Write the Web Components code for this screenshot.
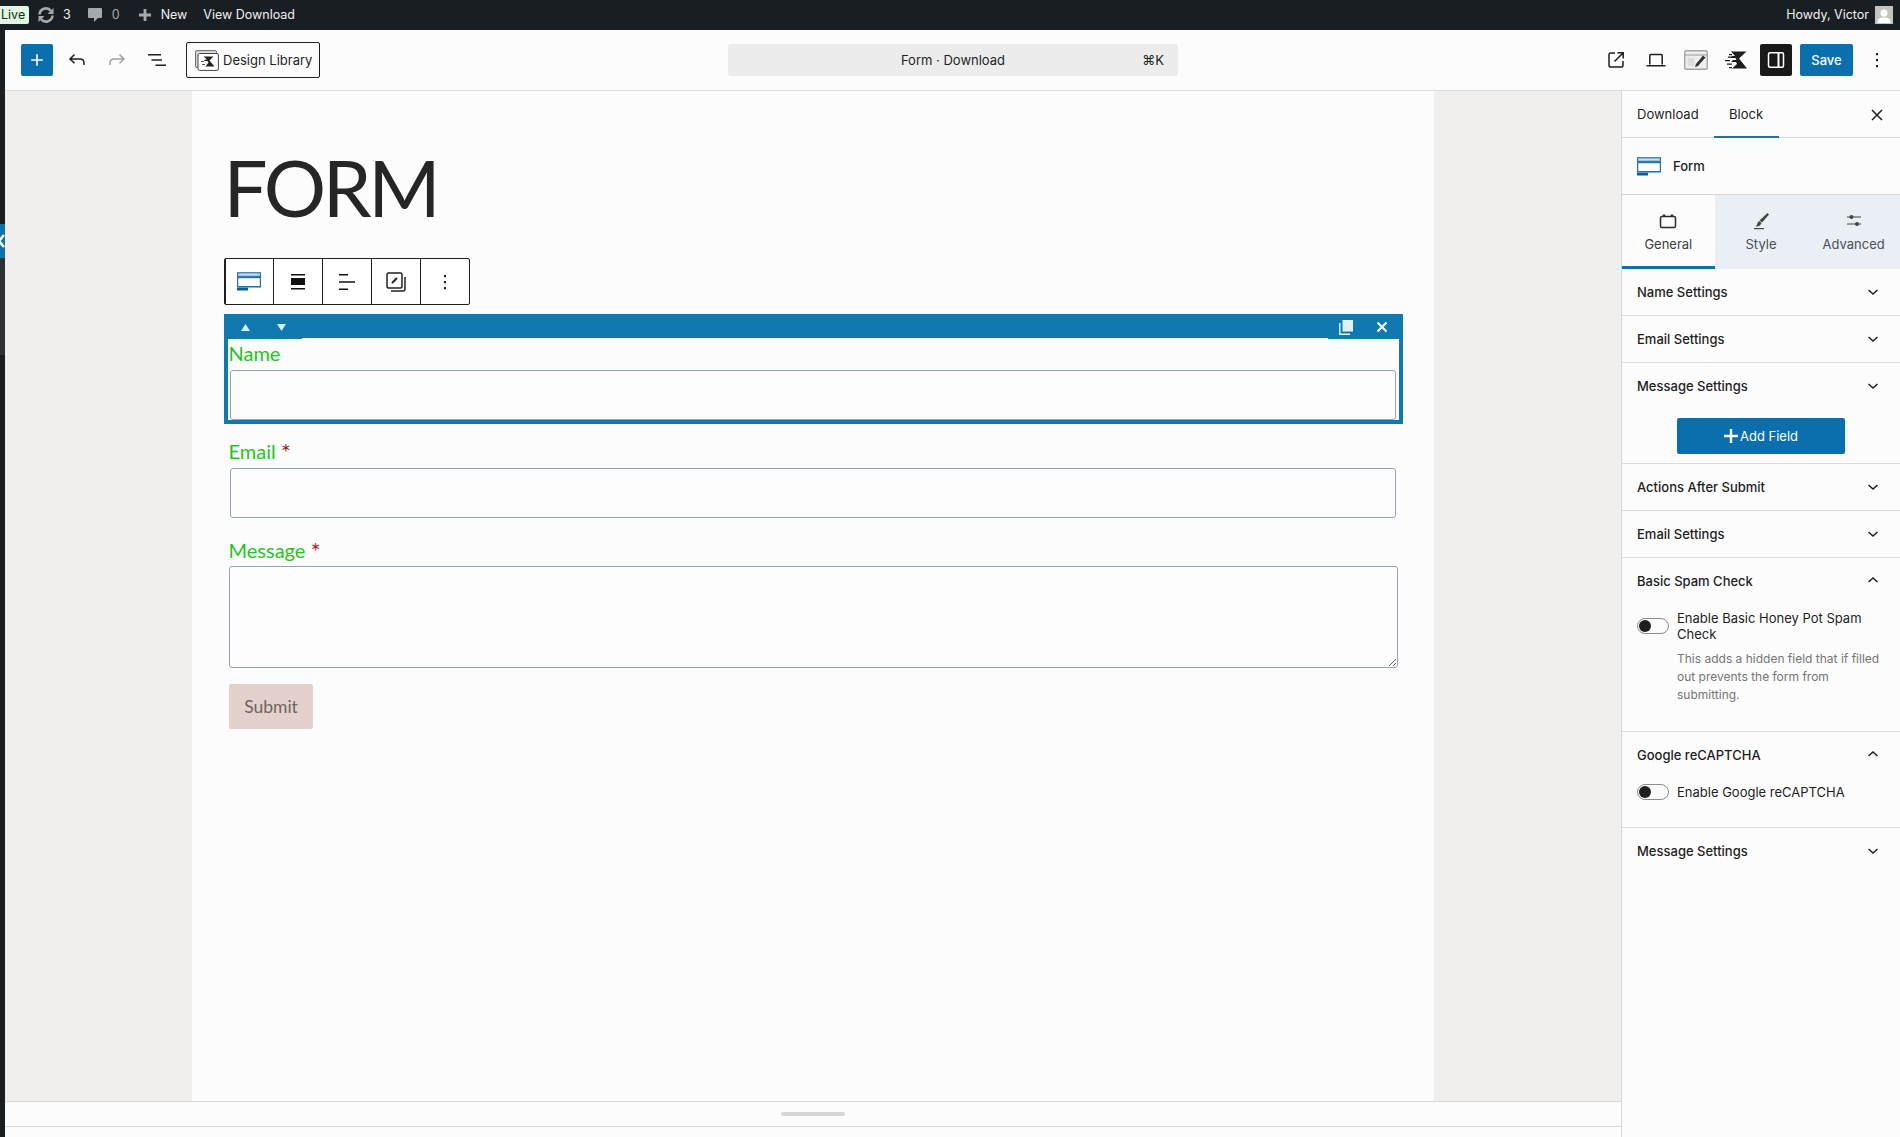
<!DOCTYPE html>
<html lang="en"><head><meta charset="utf-8"><title>Form</title>
<style>
html,body{margin:0;height:100%;overflow:hidden;background:#fcfcfc}
body{font:13px/1.4 Inter,"Liberation Sans",sans-serif;color:#1e1e1e}
</style></head><body>
<wp-editor>
  <wp-adminbar slot="bar"></wp-adminbar>
  <wp-rail slot="rail"></wp-rail>
  <wp-toolbar slot="toolbar"></wp-toolbar>
  <wp-canvas slot="canvas"></wp-canvas>
  <wp-sidebar slot="sidebar"></wp-sidebar>
</wp-editor>
<script>
const I={
 plus:'<svg width="24" height="24" viewBox="0 0 24 24" fill="currentColor"><path d="M11.200 6.200h1.600v5h5v1.600h-5v5h-1.600v-5h-5v-1.600h5z"/></svg>',
 undo:'<svg width="24" height="24" viewBox="0 0 24 24" fill="none" stroke="currentColor" stroke-width="1.500"><path d="M9.500 6.500 5 11l4.500 4.300M5.300 11h9.700c2.500 0 4 1.700 4 4v2"/></svg>',
 redo:'<svg width="24" height="24" viewBox="0 0 24 24" fill="none" stroke="currentColor" stroke-width="1.500"><path d="M14.500 6.500 19 11l-4.500 4.300M18.700 11H9c-2.500 0-4 1.700-4 4v2"/></svg>',
 list:'<svg width="24" height="24" viewBox="0 0 24 24" fill="currentColor"><path d="M3 6h13v1.500H3zM6.500 11.300H17v1.500H6.500zM10.500 16.500H21V18H10.500z"/></svg>',
 ext:'<svg width="24" height="24" viewBox="0 0 24 24" fill="none" stroke="currentColor" stroke-width="1.500"><path d="M11 5H6.500A1.500 1.500 0 0 0 5 6.500v11A1.500 1.500 0 0 0 6.500 19h11a1.500 1.500 0 0 0 1.500-1.500V13M13.500 4.800h5.700v5.700M19 5l-8.500 8.500"/></svg>',
 laptop:'<svg width="24" height="24" viewBox="0 0 24 24" fill="none" stroke="currentColor" stroke-width="1.500"><path d="M5.800 16.500V7.200a.8.8 0 0 1 .8-.8h10.800a.8.8 0 0 1 .8.8v9.300M2.500 17.700h19"/></svg>',
 kad:'<svg width="24" height="24" viewBox="0 0 24 24" fill="currentColor"><path d="M7 3.500h15.500L15 10.500l8 10H8l5-4.500-1-2-5 0 2-2h3.500l-1-2-5 0 1.500-2H11z"/><path d="M1 12h5v1.300H1zM4 8.500h3.500v1.300H4zM3 15.500h5v1.300H3zM5 6h3v1.300H5zM5 19h3v1.300H5z"/></svg>',
 chev:'<svg width="24" height="24" viewBox="0 0 24 24" fill="none" stroke="currentColor" stroke-width="1.500"><path d="m7.500 10 4.500 4 4.500-4"/></svg>',
 chevUp:'<svg width="24" height="24" viewBox="0 0 24 24" fill="none" stroke="currentColor" stroke-width="1.500"><path d="m7.500 13 4.500-4 4.500 4"/></svg>',
 dots:'<svg width="24" height="24" viewBox="0 0 24 24" fill="currentColor"><path d="M11 5h2v2.300h-2zM11 11h2v2.300h-2zM11 17h2v2.300h-2z"/></svg>',
 x:'<svg width="24" height="24" viewBox="0 0 24 24" fill="none" stroke="currentColor" stroke-width="1.500"><path d="m7 7 10 10M17 7 7 17"/></svg>',
 form:'<svg width="24" height="19" viewBox="0 0 24 19"><g fill="none" stroke="#2a6ea8" stroke-width="1.200"><rect x=".6" y=".8" width="22.800" height="3.500" fill="#cfe0ee"/><rect x=".6" y="5.600" width="22.800" height="9"/></g><path d="M0 15h11v3.500H0z" fill="#0b5d9e"/><path d="M0 15h24v.8H0z" fill="#7aa6c8"/></svg>'
};
function def(name,css,html){customElements.define(name,class extends HTMLElement{constructor(){super();this.attachShadow({mode:'open'}).innerHTML='<style>'+css+'</style>'+(typeof html==='function'?html(this):html)}})}

def('wp-editor',`:host{display:grid;grid-template:30px 61px 1fr/5px 1fr 279px;height:100vh}
 ::slotted([slot=bar]){grid-column:1/4}
 ::slotted([slot=rail]){grid-row:2/4}
 ::slotted([slot=toolbar]){grid-column:2/4}`,
 `<slot name="bar"></slot><slot name="rail"></slot><slot name="toolbar"></slot><slot name="canvas"></slot><slot name="sidebar"></slot>`);

def('wp-adminbar',`:host{display:flex;align-items:center;background:#191e23;color:#f0f0f1;font:12.500px/1 Inter,"Liberation Sans",sans-serif;height:30px;overflow:hidden}
 .live{background:#e3f5e3;color:#10301a;height:18px;width:29px;box-sizing:border-box;padding-left:1px;display:flex;align-items:center;border-radius:0 2px 2px 0;font-size:12.500px}
 .g{color:#a7aaad;display:flex}
 .sp{flex:1}
 .av{width:18px;height:18px;background:#c4c4c4;margin:0 7px 0 6px;display:flex}
 span{white-space:nowrap}`,
 `<span class="live">Live</span>
 <span class="g" style="margin-left:8px"><svg width="18" height="18" viewBox="0 0 18 18" fill="none" stroke="currentColor" stroke-width="2.600"><path d="M2.500 8.500A6.500 6.500 0 0 1 13.800 4.600M15.500 9.500A6.500 6.500 0 0 1 4.200 13.400"/><path d="M16.500 2v6h-6zM1.500 16v-6h6z" fill="currentColor" stroke="none"/></svg></span>
 <span style="margin-left:8px">3</span>
 <span class="g" style="margin-left:16px"><svg width="16" height="18" viewBox="0 0 16 18" fill="currentColor"><path d="M2 2h12a1 1 0 0 1 1 1v8a1 1 0 0 1-1 1h-3l-4 4v-4H2a1 1 0 0 1-1-1V3a1 1 0 0 1 1-1z"/></svg></span>
 <span class="g" style="margin-left:9px">0</span>
 <span class="g" style="margin-left:18px"><svg width="14" height="14" viewBox="0 0 15 15" fill="currentColor"><path d="M6 1h3v5h5v3H9v5H6V9H1V6h5z"/></svg></span>
 <span style="margin-left:9px">New</span>
 <span style="margin-left:16px">View Download</span>
 <span class="sp"></span>
 <span>Howdy, Victor</span>
 <span class="av"><svg width="18" height="18" viewBox="0 0 18 18" fill="#fff"><circle cx="9" cy="7" r="3.500"/><path d="M2.500 17c0-5 3-5.500 6.500-5.500s6.500.5 6.500 5.500z"/></svg></span>`);

def('wp-rail',`:host{display:flex;flex-direction:column;background:#191e23;overflow:hidden}
 .a{height:194px}
 .b{height:34px;background:#0d72ad;position:relative;overflow:hidden}
 .b svg{display:block;margin:9px 0 0 -3px}
 .c{height:97px;background:#2a3236}`,
 `<div class="a"></div><div class="b"><svg width="9" height="16" viewBox="0 0 9 16" fill="none" stroke="#fff" stroke-width="2.500"><path d="M7 2 2 8l5 6"/></svg></div><div class="c"></div>`);

def('wp-toolbar',`:host{display:flex;align-items:center;height:61px;box-sizing:border-box;border-bottom:1px solid #dcdcde;background:#fcfcfc;padding:0 7px 0 16px;position:relative}
 .ic{width:32px;height:32px;display:flex;align-items:center;justify-content:center;flex:none;margin-left:8px;color:#1e1e1e}
 .add{background:#0b6fad;color:#fff;border-radius:2px;margin-left:0}
 .lib{display:flex;align-items:center;gap:4px;height:36px;width:134px;box-sizing:border-box;border:1px solid #1e1e1e;border-radius:2px;margin-left:13px;padding-left:8px;font-size:13px}
 .cmd{position:absolute;left:723px;width:450px;height:32px;box-sizing:border-box;background:#ececec;border-radius:3px;display:flex;align-items:center;justify-content:center;font-size:13px}
 .cmd b{position:absolute;right:14px;font-weight:400;font-size:13px}
 .sp{flex:1}
 .tog{background:#191919;color:#fff;border-radius:2px}
 .save{background:#0b6fad;color:#fff;height:32px;width:53px;border-radius:2px;display:flex;align-items:center;justify-content:center;font-size:13px;margin-left:8px;font-weight:500}`,
 `<span class="ic add">${I.plus}</span>
 <span class="ic">${I.undo}</span>
 <span class="ic" style="color:#a0a0a0">${I.redo}</span>
 <span class="ic">${I.list}</span>
 <span class="lib"><svg width="24" height="21" viewBox="0 0 24 21" fill="none"><rect x=".6" y=".6" width="21" height="17" rx="1.500" fill="#ddd" stroke="#666"/><rect x="3" y="3.500" width="20.400" height="16.900" rx="1.500" fill="#fff" stroke="#444"/><path d="M8.500 6.500h10l-4 4 5 6h-9l3-4-1-1.500h-4l2-1.500h1.500z" fill="#222"/><path d="M6 11h3v1H6zM7 14h3v1H7z" fill="#555"/></svg><span>Design Library</span></span>
 <span class="cmd">Form · Download<b>⌘K</b></span>
 <span class="sp"></span>
 <span class="ic">${I.ext}</span>
 <span class="ic">${I.laptop}</span>
 <span class="ic"><svg width="24" height="20" viewBox="0 0 24 20"><rect x=".7" y=".7" width="22.600" height="18.600" rx="1.500" fill="#eee" stroke="#a5a5a5" stroke-width="1.400"/><path d="M1 5h22" stroke="#999"/><path d="M3.500 8h7v8h-7z" fill="#ddd"/><path d="M12 14l7-8.500 2.500 2-7.500 8.500-3 1z" fill="#333"/></svg></span>
 <span class="ic">${I.kad}</span>
 <span class="ic tog"><svg width="24" height="24" viewBox="0 0 24 24" fill="none" stroke="currentColor" stroke-width="1.500"><rect x="4.500" y="4.700" width="15" height="14.600" rx="1.500"/><path d="M14.500 4.700v14.600" stroke-width="2"/></svg></span>
 <span class="save">Save</span>
 <span class="ic" style="margin-left:8px">${I.dots}</span>`);

def('wp-canvas',`:host{display:flex;flex-direction:column;min-width:0;overflow:hidden;background:#f0efed}
 .scroll{flex:none;height:1010px;display:flex;justify-content:center;padding-right:1px}
 .page{width:1242px;background:#fcfcfc;box-sizing:border-box;padding:0 32px;display:flex;flex-direction:column;align-items:stretch}
 h1{font:400 78px/1 Lato,"Liberation Sans",sans-serif;color:#262626;margin:57px 0 0 0;letter-spacing:-3.400px}
 .resize{flex:none;height:26px;box-sizing:border-box;background:#fcfcfc;border-top:1px solid #d8d8d8;border-bottom:1px solid #d8d8d8;display:flex;align-items:center;justify-content:center}
 .resize i{width:64px;height:4px;border-radius:2px;background:#d6d6d6;display:block}
 .rest{flex:1;background:#fcfcfc}`,
 `<div class="scroll"><div class="page"><h1>FORM</h1><wp-blocktools></wp-blocktools><wp-formblock></wp-formblock></div></div>
 <div class="resize"><i></i></div><div class="rest"></div>`);

def('wp-blocktools',`:host{display:flex;width:246px;height:47px;box-sizing:border-box;border:1px solid #1e1e1e;border-radius:2px;margin-top:32px;background:#fff}
 span{flex:1;display:flex;align-items:center;justify-content:center;border-left:1px solid #1e1e1e}
 span:first-child{border-left:0}`,
 `<span>${I.form}</span>
 <span><svg width="24" height="24" viewBox="0 0 24 24" fill="#111"><path d="M5 4h14v1.500H5zM5 8h14v7H5zM5 18h14v1.500H5z"/></svg></span>
 <span><svg width="24" height="24" viewBox="0 0 24 24" fill="#111"><path d="M4 4h9v1.500H4zM4 11.300h16v1.500H4zM4 18.500h9V20H4z"/></svg></span>
 <span><svg width="24" height="24" viewBox="0 0 24 24" fill="none" stroke="#222" stroke-width="1.500"><rect x="3" y="3" width="15" height="15" rx="1.500"/><path d="M21 7v12a2 2 0 0 1-2 2H7"/><path d="m8 13 5-5" stroke-width="2"/></svg></span>
 <span>${I.dots}</span>`);

def('wp-formblock',`:host{display:block;margin-top:9px;margin-right:-1px}
 .sel{border:4px solid #0f79b0;border-top:0;box-sizing:border-box;height:110px;display:flex;flex-direction:column}
 .head{height:24px;background:#0f79b0;display:flex;color:#fff;flex:none;margin:0 -1px;position:relative}
 .grp{display:flex;height:25px;background:#0f79b0;align-items:center;padding-top:1px;box-sizing:border-box}
 .tri{width:36px;display:flex;justify-content:center}
 .sp{flex:1}
 .r{display:flex;align-items:center;justify-content:center;width:36px}
 .wrap{padding:0 0 0 1px}
 .rest{padding:0 5px}
 .lab{font:400 20px/24px Lato,"Liberation Sans",sans-serif;color:#1fc41f;display:block}
 .lab em{color:#9c2b2b;font-style:normal;margin-left:5px;font-size:24px;line-height:20px;position:relative;top:2px}
 input,textarea{display:block;width:100%;box-sizing:border-box;border:1px solid #94a3b8;border-radius:3px;background:#fdfdfd;margin:0;padding:0;outline:0}
 .btn{display:inline-flex;align-items:center;justify-content:center;width:84px;height:45px;box-sizing:border-box;padding:0 0 1px 1px;background:#e5d1cb;color:#6a6564;border-radius:2px;font:400 17.500px Lato,"Liberation Sans",sans-serif;margin-top:16px}`,
 `<div class="sel"><div class="head">
   <span class="grp" style="width:75px;padding-left:1px">
   <span class="tri"><svg width="9" height="7" viewBox="0 0 9 7" fill="#d8ecf7"><path d="M4.500 0 9 7H0z"/></svg></span>
   <span class="tri"><svg width="9" height="7" viewBox="0 0 9 7" fill="#d8ecf7"><path d="M0 0h9L4.500 7z"/></svg></span></span>
   <span class="sp"></span>
   <span class="grp">
   <span class="r"><svg width="14" height="15" viewBox="0 0 14 15" fill="#e4f0f7"><path d="M3.500 0H14v11.500H3.500z"/><path d="M0 3h1.500v10.500H11V15H0z"/></svg></span>
   <span class="r"><svg width="12" height="12" viewBox="0 0 12 12" fill="none" stroke="#fff" stroke-width="2"><path d="m1.500 1.500 9 9M10.500 1.500l-9 9"/></svg></span></span>
  </div>
  <div class="wrap"><span class="lab" style="margin-top:3px;height:29px">Name</span>
  <input aria-label="Name" style="width:1166px;height:50px;margin-left:1px"></div></div>
  <div class="rest">
   <span class="lab" style="margin-top:15px;height:29px">Email<em>*</em></span>
   <input aria-label="Email" style="width:1166px;height:50px;margin-left:1px">
   <span class="lab" style="margin-top:20px;height:28px">Message<em>*</em></span>
   <textarea aria-label="Message" style="height:102px"></textarea>
   <span class="btn">Submit</span>
  </div>`);

def('wp-panel',`:host{display:block;border-bottom:1px solid #dcdcde;font:13px/16px Inter,"Liberation Sans",sans-serif}
 :host([noline]){border-bottom:0}
 .h{height:46px;display:flex;align-items:center;justify-content:space-between;padding:0 15px 0 15px;font-weight:500;color:#1e1e1e}
 svg{display:block}`,
 t=>`<div class="h"><span>${t.getAttribute('title')}</span>${t.hasAttribute('open')?I.chevUp:I.chev}</div><slot></slot>`);

def('wp-toggle',`:host{display:grid;grid-template-columns:32px 1fr;column-gap:8px;font:13px/16px Inter,"Liberation Sans",sans-serif;color:#1e1e1e;padding:6px 12px 0 15px;align-items:center}
 .t{width:32px;height:16px;box-sizing:border-box;border:1px solid #8b8b8b;border-radius:9px;position:relative}
 .t i{position:absolute;left:2px;top:2px;width:10px;height:10px;border-radius:50%;background:#1e1e1e;transform:scale(1.200)}
 .help{grid-column:2}
 ::slotted(small){display:block;color:#757575;font-size:12px;line-height:18px;margin-top:8px}`,
 t=>`<span class="t"><i></i></span><div>${t.getAttribute('label')}</div><div class="help"><slot></slot></div>`);

def('wp-sidebar',`:host{display:flex;flex-direction:column;border-left:1px solid #d5d5d5;background:#fcfcfc;box-sizing:border-box;height:1046px;overflow:hidden;font:13px/16px Inter,"Liberation Sans",sans-serif}
 .tabs{height:47px;flex:none;box-sizing:border-box;border-bottom:1px solid #dcdcde;display:flex;align-items:stretch;position:relative}
 .tabs span{display:flex;align-items:center;box-sizing:border-box;margin-bottom:-1px;padding-bottom:2px}
 .tabs .on{box-shadow:inset 0 -2px 0 #1a73aa;width:65px;justify-content:center;margin-left:15px}
 .tabs .x{margin-left:auto;padding-right:11px;padding-bottom:0}
 .name{height:57px;flex:none;box-sizing:border-box;border-bottom:1px solid #d5d5d5;display:flex;align-items:center;gap:12px;padding-left:15px;font-weight:500}
 .kt{height:74px;flex:none;display:flex}
 .kt div{display:flex;flex-direction:column;align-items:center;justify-content:flex-start;padding-top:17px;gap:6px;width:93px;box-sizing:border-box;background:#e9eff5;color:#4a5058;font-size:13px;line-height:16px}
 .kt .on{background:#fcfcfc;box-shadow:inset 0 -3px 0 #0f6fa8;color:#3a3f46;width:93px}
 .add{display:flex;justify-content:center;padding:9px 0 9px}
 .add span{width:168px;height:36px;background:#0b6fad;color:#fff;display:flex;align-items:center;justify-content:center;border-radius:2px;gap:2px;font-size:13px}
 .line{border-bottom:1px solid #dcdcde}`,
 `<div class="tabs"><span style="margin-left:15px">Download</span><span class="on">Block</span><span class="x">${I.x}</span></div>
 <div class="name">${I.form}<span>Form</span></div>
 <div class="kt">
  <div class="on"><svg width="18" height="18" viewBox="0 0 18 18" fill="none" stroke="#2b2b2b" stroke-width="1.500"><rect x="1.500" y="4.500" width="15" height="11" rx="1.500"/><path d="M5 2.500v2M13 2.500v2" stroke-width="2.500"/></svg>General</div>
  <div><svg width="18" height="18" viewBox="0 0 18 18" fill="#444"><path d="M15.500 1 17 2.500 10 10.500l-2.500-2z"/><path d="M7 9l2.500 2-1.500 2.500c-1.500 1-3 1-4.500 1 1.200-1 1.800-2 2-3.500z"/><path d="M2 16h10v1.200H2z"/></svg>Style</div>
  <div><svg width="18" height="18" viewBox="0 0 18 18" fill="#444"><path d="M2 4.500h14v1H2zM2 11.500h14v1H2z"/><circle cx="6.500" cy="5" r="2"/><circle cx="12" cy="12" r="2"/></svg>Advanced</div>
 </div>
 <wp-panel title="Name Settings"></wp-panel>
 <wp-panel title="Email Settings"></wp-panel>
 <wp-panel title="Message Settings" noline></wp-panel>
 <div class="add line"><span><svg width="14" height="14" viewBox="0 0 14 14" fill="#fff"><path d="M5.800 0h2.400v5.800H14v2.400H8.200V14H5.800V8.200H0V5.800h5.800z"/></svg>Add Field</span></div>
 <wp-panel title="Actions After Submit"></wp-panel>
 <wp-panel title="Email Settings"></wp-panel>
 <wp-panel title="Basic Spam Check" open style="height:173px">
  <wp-toggle label="Enable Basic Honey Pot Spam Check"><small>This adds a hidden field that if filled out prevents the form from submitting.</small></wp-toggle>
 </wp-panel>
 <wp-panel title="Google reCAPTCHA" open style="height:95px">
  <wp-toggle label="Enable Google reCAPTCHA"></wp-toggle>
 </wp-panel>
 <wp-panel title="Message Settings" noline></wp-panel>`);
</script>
</body></html>
